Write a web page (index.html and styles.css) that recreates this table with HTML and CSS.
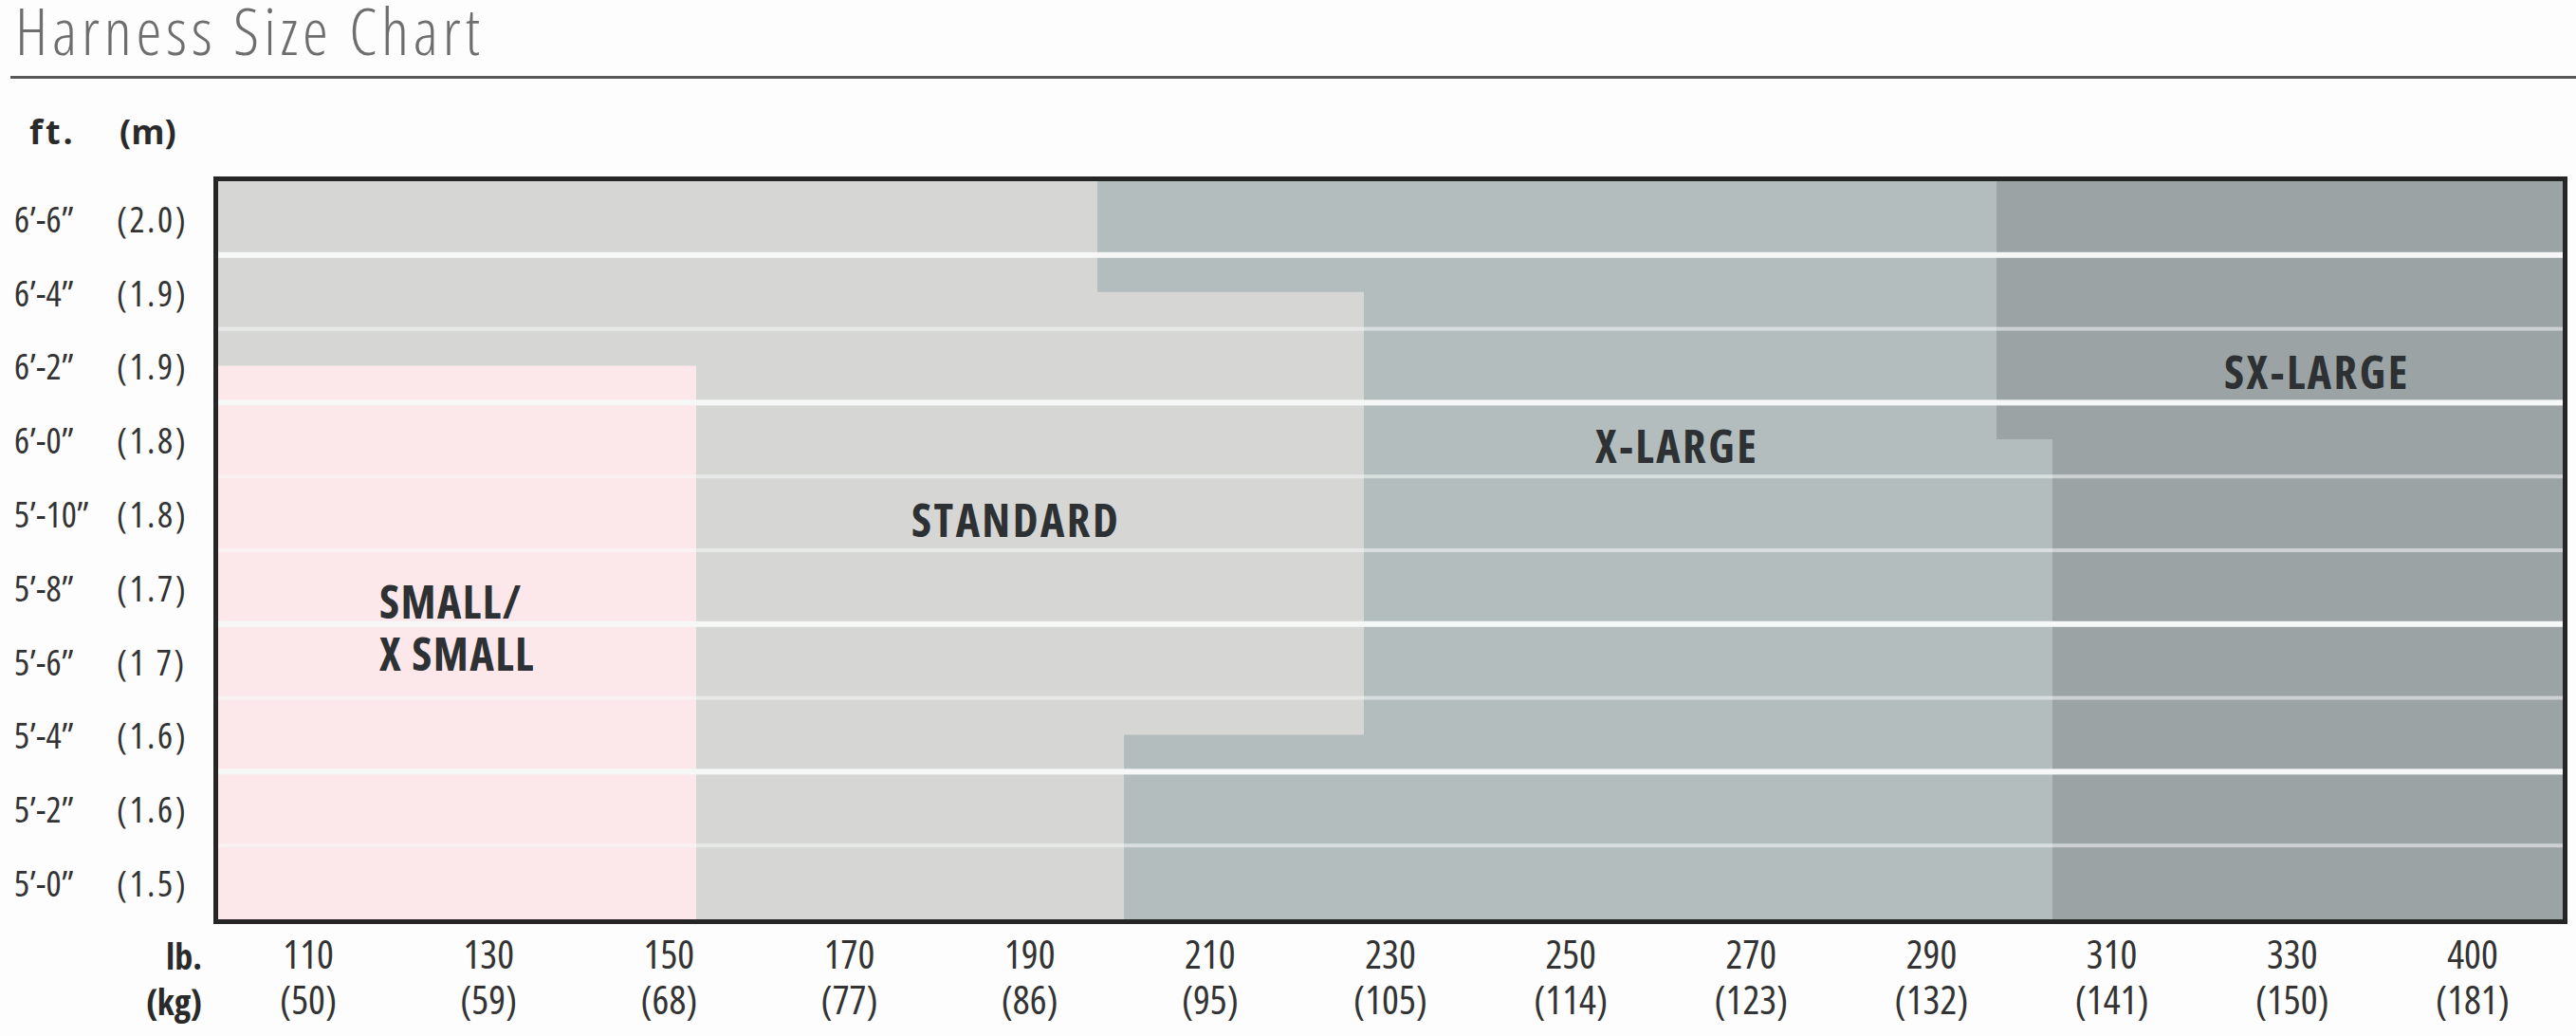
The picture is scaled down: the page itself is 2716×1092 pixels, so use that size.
FILE: index.html
```html
<!DOCTYPE html>
<html>
<head>
    <meta charset="UTF-8">
    <meta name="viewport" content="width=device-width, initial-scale=1.0">
    <title>Harness Size Chart</title>
    <link rel="stylesheet" href="styles.css">
</head>
<body>
    <div class="page">
        <h1 class="title">Harness Size Chart</h1>
        <div class="chart">
            <div class="y-head"><span class="unit">ft.</span><span>(m)</span></div>

            <ul class="y-axis">
                <li><span class="unit">6’-6”</span><span class="metric">(2.0)</span></li>
                <li><span class="unit">6’-4”</span><span class="metric">(1.9)</span></li>
                <li><span class="unit">6’-2”</span><span class="metric">(1.9)</span></li>
                <li><span class="unit">6’-0”</span><span class="metric">(1.8)</span></li>
                <li><span class="unit">5’-10”</span><span class="metric">(1.8)</span></li>
                <li><span class="unit">5’-8”</span><span class="metric">(1.7)</span></li>
                <li><span class="unit">5’-6”</span><span class="metric">(1 7)</span></li>
                <li><span class="unit">5’-4”</span><span class="metric">(1.6)</span></li>
                <li><span class="unit">5’-2”</span><span class="metric">(1.6)</span></li>
                <li><span class="unit">5’-0”</span><span class="metric">(1.5)</span></li>
            </ul>

            <div class="plot">
                <svg class="zones" viewBox="0 0 2472 778" preserveAspectRatio="none">
                    <rect class="zone-standard" width="2472" height="778"/>
                    <rect class="zone-small" x="0" y="194.5" width="504" height="583.5"/>
                    <polygon class="zone-xl" points="927,0 1875,0 1875,272.3 1934,272.3 1934,778 955,778 955,583.5 1208,583.5 1208,116.7 927,116.7"/>
                    <polygon class="zone-sx" points="1875,0 2472,0 2472,778 1934,778 1934,272.3 1875,272.3"/>
                    <!-- row separators -->
                    <rect class="rule" y="74.8" width="2472" height="6"/>
                    <rect class="rule faint" y="153.6" width="2472" height="4"/>
                    <rect class="rule" y="230.4" width="2472" height="6"/>
                    <rect class="rule faint" y="309.2" width="2472" height="4"/>
                    <rect class="rule faint" y="387" width="2472" height="4"/>
                    <rect class="rule" y="463.8" width="2472" height="6"/>
                    <rect class="rule faint" y="542.6" width="2472" height="4"/>
                    <rect class="rule" y="619.4" width="2472" height="6"/>
                    <rect class="rule faint" y="698.2" width="2472" height="4"/>
                </svg>
                <div class="zone-label label-small">SMALL/<br>X SMALL</div>
                <div class="zone-label label-standard">STANDARD</div>
                <div class="zone-label label-xl">X-LARGE</div>
                <div class="zone-label label-sx">SX-LARGE</div>
            </div>

            <div class="x-head">lb.<br>(kg)</div>

            <ul class="x-axis">
                <li>110<br>(50)</li>
                <li>130<br>(59)</li>
                <li>150<br>(68)</li>
                <li>170<br>(77)</li>
                <li>190<br>(86)</li>
                <li>210<br>(95)</li>
                <li>230<br>(105)</li>
                <li>250<br>(114)</li>
                <li>270<br>(123)</li>
                <li>290<br>(132)</li>
                <li>310<br>(141)</li>
                <li>330<br>(150)</li>
                <li>400<br>(181)</li>
            </ul>
        </div>
    </div>
</body>
</html>
```

FILE: styles.css
```css
body {
    margin: 0;
    background-color: #fdfdfd;
    color: #333;
    font-family: "Open Sans", "Liberation Sans", Arial, sans-serif;
    font-stretch: 75%;
}
.page {
    width: 2716px;
}
.title {
    margin: 0 0 0 11px;
    padding: 0 0 16px 5px;
    font-size: 68px;
    line-height: 64px;
    font-weight: 300;
    letter-spacing: 4.8px;
    color: #6e6e6e;
    border-bottom: 3px solid #585858;
}
.chart {
    display: grid;
    grid-template-columns: 225px 2482px;
    grid-template-rows: 103px 788px auto;
    grid-template-areas:
        "yhead ."
        "yaxis plot"
        "xhead xaxis";
}

/* axis headings */
.y-head {
    grid-area: yhead;
    display: flex;
    align-items: flex-end;
    padding: 0 0 27px 31px;
    font-size: 36px;
    line-height: 40px;
    font-weight: bold;
    font-stretch: 100%;
    color: #2a2a2a;
}
.y-head .unit {
    width: 95px;
    letter-spacing: 3px;
}
.x-head {
    grid-area: xhead;
    padding: 9px 12px 0 0;
    text-align: right;
    font-size: 38px;
    line-height: 48px;
    font-weight: bold;
    color: #2a2a2a;
}

/* axis labels */
.y-axis {
    grid-area: yaxis;
    list-style: none;
    margin: 0;
    padding: 5px 0;
    display: flex;
    flex-direction: column;
}
.y-axis li {
    flex: 1;
    display: flex;
    align-items: center;
    padding-left: 15px;
    font-size: 38px;
}
.y-axis .unit {
    width: 108px;
}
.y-axis .metric {
    letter-spacing: 2.5px;
}
.x-axis {
    grid-area: xaxis;
    list-style: none;
    margin: 0;
    padding: 7px 5px 0;
    display: flex;
}
.x-axis li {
    flex: 1;
    text-align: center;
    font-size: 42px;
    line-height: 48px;
}

/* chart area */
.plot {
    grid-area: plot;
    position: relative;
    border: 5px solid #262626;
    background-color: #d6d6d4;
}
.zones {
    display: block;
    width: 100%;
    height: 100%;
}
.zone-standard {
    fill: #d6d6d4;
}
.zone-small {
    fill: #fce8ea;
}
.zone-xl {
    fill: #b3bdbd;
}
.zone-sx {
    fill: #9ba3a4;
}
.rule {
    fill: #f6f8f8;
}
.rule.faint {
    fill-opacity: 0.55;
}
.zone-label {
    position: absolute;
    font-size: 48px;
    line-height: 58px;
    font-weight: bold;
    letter-spacing: 2.5px;
    color: #2d3133;
    white-space: nowrap;
}
.label-small {
    left: 170px;
    top: 415px;
    line-height: 55px;
    letter-spacing: 1.5px;
}
.label-standard {
    left: 731px;
    top: 328px;
}
.label-xl {
    left: 1452px;
    top: 250px;
}
.label-sx {
    left: 2115px;
    top: 172px;
}
```
